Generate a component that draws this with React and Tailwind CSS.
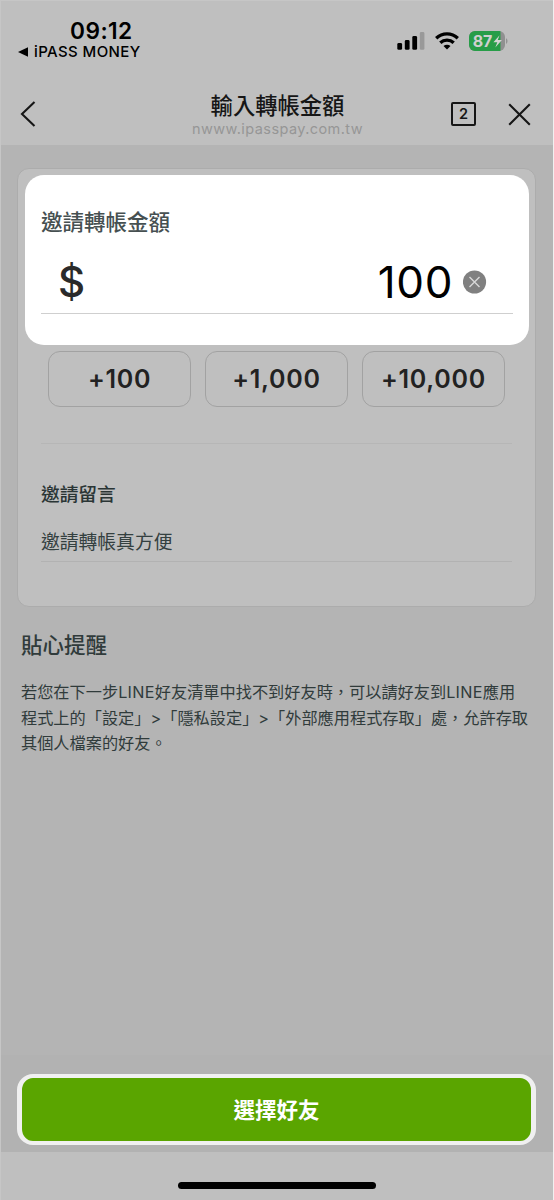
import React from 'react';

const SignalIcon = () => (
  <svg width="28" height="18" viewBox="0 0 28 18">
    <rect x="0.3" y="11" width="4.8" height="6.8" rx="1.4" fill="#000" />
    <rect x="7.8" y="8" width="4.8" height="9.8" rx="1.4" fill="#000" />
    <rect x="15.3" y="4" width="4.8" height="13.8" rx="1.4" fill="#000" />
    <rect x="22.8" y="0" width="4.6" height="17.8" rx="1.4" fill="#999" />
  </svg>
);

const WifiIcon = () => (
  <svg width="24" height="18" viewBox="0 0 24 18" fill="none" stroke="#000" strokeWidth="3.3">
    <path d="M1.2 6.3a15.5 15.5 0 0 1 21.6 0" />
    <path d="M5.3 10.7a9.8 9.8 0 0 1 13.4 0" />
    <path d="M12 17.6l-3.5-3.5a5 5 0 0 1 7 0z" fill="#000" stroke="none" />
  </svg>
);

const BatteryIcon = () => (
  <svg width="39" height="20" viewBox="0 0 39 20">
    <defs>
      <clipPath id="charge">
        <rect width="31.5" height="20" />
      </clipPath>
    </defs>
    <rect width="36" height="20" rx="6" fill="#909090" />
    <rect width="36" height="20" rx="6" fill="#279d48" clipPath="url(#charge)" />
    <path d="M37 7.2c2 .8 2 4.8 0 5.6z" fill="#929292" />
    <text x="3.7" y="15.7" fontSize="16" fontWeight="700" fontFamily="Inter, sans-serif" fill="#cfcfcf">87</text>
    <path d="M30.6 4.2l-6.2 7h3.9l-2 5.3 6.6-7.4h-4.2z" fill="#d4d4d4" />
  </svg>
);

const StatusBar = () => (
  <div className="flex h-[74px] justify-between pl-[17px] pr-[45px]">
    <div className="pt-[17px]">
      <div className="ml-[52px] h-[25px] text-[22.7px] font-semibold leading-[25px] tracking-[0.45px] text-black">09:12</div>
      <div className="flex h-[18px] items-center gap-[5px] text-[15px] font-medium leading-[18px] tracking-[0.4px] text-black">
        <svg width="11" height="10" viewBox="0 0 11 10">
          <path d="M0 5L10 0.2v9.6z" />
        </svg>
        <span className="whitespace-nowrap">iPASS MONEY</span>
      </div>
    </div>
    <div className="mt-[30px] flex h-[20px] items-center gap-[10px]">
      <SignalIcon />
      <WifiIcon />
      <BatteryIcon />
    </div>
  </div>
);

const NavBar = () => (
  <div className="flex h-[70px] items-start justify-between pl-[19px] pr-[22px] text-[#161616]">
    <svg className="mt-[26px]" width="16" height="26" viewBox="0 0 16 26" fill="none" stroke="currentColor" strokeWidth="2.1">
      <path d="M14.5 1L2 13l12.5 12" />
    </svg>
    <div className="ml-[68px] mt-[18px] text-center">
      <h1 className="h-[26px] whitespace-nowrap text-[22.3px] font-medium leading-[26px]">輸入轉帳金額</h1>
      <p className="h-[20px] whitespace-nowrap text-[14.5px] leading-[20px] tracking-[0.42px] text-[#969696]">nwww.ipasspay.com.tw</p>
    </div>
    <div className="mt-[27px] flex items-center gap-[32px]">
      <div className="flex h-[24px] w-[25px] items-center justify-center rounded-[2px] border-2 border-[#161616] text-[14.5px] font-semibold">2</div>
      <svg width="23" height="23" viewBox="0 0 23 23" stroke="currentColor" strokeWidth="2.1">
        <path d="M1.2 1.2l20.6 20.6M21.8 1.2L1.2 21.8" />
      </svg>
    </div>
  </div>
);

const AmountBox = () => (
  <div className="h-[170px] w-[504px] rounded-[19px] bg-white px-4 pt-[32px]">
    <h2 className="h-[30px] text-[21.5px] font-medium leading-[30px] text-[#465051]">邀請轉帳金額</h2>
    <div className="mt-[14px] flex h-[63px] items-center border-b border-[#cfcfcf] pl-[17px] pr-[26px]">
      <span className="text-[42px] font-medium leading-none text-[#2a2a2a]">$</span>
      <span className="ml-auto text-[44px] leading-none tracking-[0.6px] text-black">100</span>
      <svg className="ml-[10px]" width="24" height="24" viewBox="0 0 24 24">
        <circle cx="11.5" cy="12" r="11.6" fill="#808080" />
        <path d="M6.5 7l10 10M16.5 7l-10 10" stroke="#d8d8d8" strokeWidth="1.4" />
      </svg>
    </div>
  </div>
);

const amounts = ['+100', '+1,000', '+10,000'];

const App = () => (
  <div className="w-[554px] border-r border-[#f0f0f0] font-['Inter','Noto_Sans_CJK_TC',sans-serif]">
    <div className="flex h-[1200px] flex-col border-l border-t border-[#c6c6c6] bg-[#b4b4b4]">
      <header className="h-[144px] shrink-0 bg-[#bfbfbf]">
        <StatusBar />
        <NavBar />
      </header>

      <section className="ml-[16px] mt-[23px] h-[439px] w-[519px] shrink-0 rounded-[12px] border border-[#acacac] bg-[#bfbfbf] pl-[7px] pt-[6px]">
        <AmountBox />
        <div className="mt-[6px] flex gap-[14px] pl-[23px] pr-[30px]">
          {amounts.map((amount) => (
            <button
              key={amount}
              className="h-[56px] flex-1 rounded-[12px] border-[1.5px] border-[#a2a2a2] pt-px text-[25px] font-semibold tracking-[0.7px] text-[#222]"
            >
              {amount}
            </button>
          ))}
        </div>
        <div className="ml-4 mr-[23px] mt-[36px] border-t border-[#b6b6b6] pt-[38px]">
          <h2 className="h-[26px] text-[18.7px] font-medium leading-[26px] text-[#2a3535]">邀請留言</h2>
          <p className="mt-[22px] h-[32px] border-b border-[#b2b2b2] text-[18.8px] leading-[26px] text-[#344040]">邀請轉帳真方便</p>
        </div>
      </section>

      <section className="ml-[20px] mt-[22px] text-[#303b3b]">
        <h2 className="h-[32px] text-[21.5px] font-medium leading-[32px]">貼心提醒</h2>
        <div className="mt-[19px] whitespace-nowrap text-[16.2px] leading-[25.5px]">
          <p>
            若您在下一步<span className="tracking-[0.3px]">LINE</span>好友清單中找不到好友時，可以請好友到<span className="tracking-[0.3px]">LINE</span>應用
          </p>
          <p>程式上的「設定」&gt;「隱私設定」&gt;「外部應用程式存取」處，允許存取</p>
          <p>其個人檔案的好友。</p>
        </div>
      </section>

      <footer className="mt-auto h-[145px] shrink-0 bg-[#bfbfbf]">
        <div className="h-[97px] bg-[#b2b2b2] pl-[16px] pt-[19px]">
          <button className="h-[71px] w-[519px] rounded-[16px] border-x-5 border-y-4 border-[#f0f0f0] bg-[#5aa500] pt-[2px] text-[21.5px] font-bold text-white">
            選擇好友
          </button>
        </div>
        <div className="ml-[177px] mt-[30px] h-[7px] w-[198px] rounded-full bg-black" />
      </footer>
    </div>
  </div>
);

export default App;
